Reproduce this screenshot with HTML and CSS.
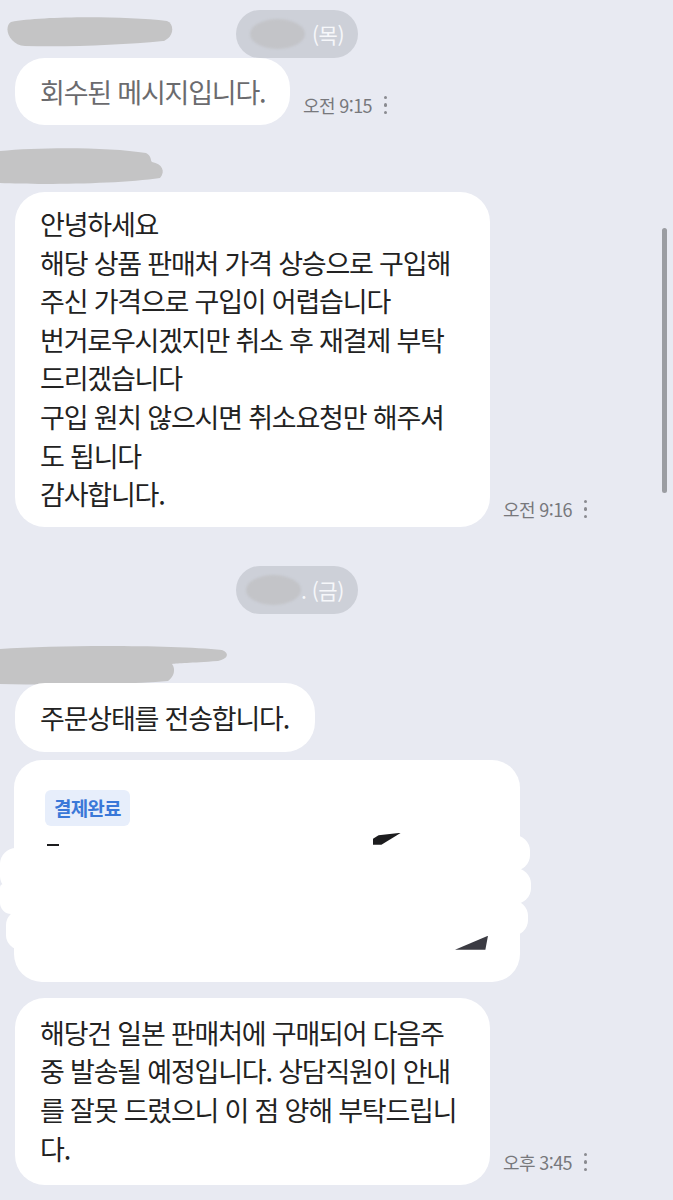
FILE: index.html
```html
<!DOCTYPE html>
<html lang="ko">
<head>
<meta charset="utf-8">
<title>채팅</title>
<link rel="stylesheet" href="styles.css">
</head>
<body>
<div class="scrollbar"></div>
<main class="chat">
  <div class="top-row">
    <svg class="scribble s1" width="170" height="30" viewBox="0 0 170 30"><path d="M8 5 C 40 -1, 120 -1, 164 4 C 172 7, 171 21, 160 24 C 120 28, 70 30, 22 29 C 6 28, 0 10, 8 5 Z" fill="#c4c4c5"/></svg>
    <div class="date-pill"><span class="blur"></span><span class="day">(목)</span></div>
  </div>

  <div class="msg-row r1">
    <div class="bubble recalled">회수된 메시지입니다.</div>
    <div class="meta"><span class="time">오전 9:15</span><span class="more"><i></i><i></i><i></i></span></div>
  </div>

  <svg class="scribble s2" width="170" height="38" viewBox="0 0 170 38"><path d="M0 4 C 40 0, 110 0, 146 6 C 152 9, 150 13, 152 15 C 162 17, 166 24, 160 31 C 120 37, 40 38, 0 36 Z" fill="#c4c4c5"/></svg>

  <div class="msg-row r2">
    <div class="bubble wide">안녕하세요<br>해당 상품 판매처 가격 상승으로 구입해<br>주신 가격으로 구입이 어렵습니다<br>번거로우시겠지만 취소 후 재결제 부탁<br>드리겠습니다<br>구입 원치 않으시면 취소요청만 해주셔<br>도 됩니다<br>감사합니다.</div>
    <div class="meta"><span class="time">오전 9:16</span><span class="more"><i></i><i></i><i></i></span></div>
  </div>

  <div class="date-pill p2"><span class="blur"></span><span class="day">. (금)</span></div>

  <svg class="scribble s3" width="230" height="40" viewBox="0 0 230 40"><path d="M0 4 C 60 0, 170 0, 222 5 C 230 8, 228 14, 218 16 C 190 18, 178 18, 172 19 C 176 24, 174 32, 168 36 C 120 40, 50 40, 0 39 Z" fill="#c4c4c5"/></svg>

  <div class="bubble short">주문상태를 전송합니다.</div>

  <div class="card">
    <span class="tag">결제완료</span>
    <span class="leak l1"></span>
    <span class="leak l2"></span>
    <span class="leak l3"></span>
    <span class="leak r1x"></span>
    <span class="leak r2x"></span>
    <span class="leak r3x"></span>
    <span class="mark m1"></span>
    <span class="mark m2"></span>
    <span class="mark m3"></span>
  </div>

  <div class="msg-row r4">
    <div class="bubble wide b4">해당건 일본 판매처에 구매되어 다음주<br>중 발송될 예정입니다. 상담직원이 안내<br>를 잘못 드렸으니 이 점 양해 부탁드립니<br>다.</div>
    <div class="meta"><span class="time">오후 3:45</span><span class="more"><i></i><i></i><i></i></span></div>
  </div>
</main>
</body>
</html>
```
FILE: styles.css
```css
html, body {
  margin: 0;
  padding: 0;
}
body {
  background: #e8eaf2;
  font-family: "Noto Sans CJK KR", "Noto Sans", sans-serif;
  color: #222;
  width: 673px;
  height: 1200px;
  overflow: hidden;
  position: relative;
}
.chat {
  display: flex;
  flex-direction: column;
  align-items: flex-start;
  padding-left: 15px;
  padding-top: 10px;
}
.scribble {
  display: block;
  margin-left: -15px;
}
.top-row {
  display: flex;
  align-items: flex-start;
  margin-left: -15px;
}
.s1 {
  margin-left: 3px;
  margin-top: 7px;
}
.date-pill {
  display: flex;
  align-items: center;
  height: 48px;
  width: 122px;
  box-sizing: border-box;
  border-radius: 24px;
  background: #cdd0d8;
  padding-left: 14px;
  margin-left: 63px;
}
.date-pill .blur {
  width: 55px;
  height: 30px;
  border-radius: 50%;
  background: #c3c4c8;
  filter: blur(1px);
}
.date-pill .day {
  color: #f6f7fa;
  font-size: 21px;
  margin-left: 7px;
  letter-spacing: -0.5px;
}
.p2 {
  margin-left: 221px;
  margin-top: 39px;
  padding-left: 10px;
}
.p2 .day {
  margin-left: 0;
}
.msg-row {
  display: flex;
  align-items: flex-end;
}
.bubble {
  background: #fff;
  border-radius: 30px;
  box-sizing: border-box;
  padding: 14px 25px;
  font-size: 27px;
  line-height: 39px;
  letter-spacing: -1.2px;
  white-space: nowrap;
}
.recalled {
  color: #6b6b6e;
  width: 275px;
}
.wide {
  width: 475px;
  line-height: 38.6px;
  padding-top: 13px;
  padding-bottom: 13px;
}
.short {
  width: 300px;
  padding-top: 15px;
  padding-bottom: 15px;
}
.b4 {
  padding-top: 16px;
  padding-bottom: 17px;
}
.meta {
  display: flex;
  align-items: center;
  margin-left: 13px;
  margin-bottom: 7px;
}
.time {
  font-size: 18px;
  color: #77787c;
  letter-spacing: -0.6px;
}
.more {
  display: flex;
  flex-direction: column;
  gap: 4px;
  margin-left: 12px;
}
.more i {
  display: block;
  width: 3.5px;
  height: 3.5px;
  border-radius: 50%;
  background: #8a8b90;
}
.r2 .meta { margin-bottom: 5px; }
.r4 .meta { margin-bottom: 10px; }
.s2 {
  margin-top: 22px;
}
.r2 {
  margin-top: 7px;
}
.s3 {
  margin-top: 31px;
  margin-bottom: -2px;
}
.card {
  position: relative;
  margin-top: 8px;
  margin-left: -1px;
  width: 506px;
  height: 222px;
  box-sizing: border-box;
  background: #fff;
  border-radius: 28px;
  padding: 30px 31px;
}
.tag {
  display: inline-block;
  background: #e7eefb;
  color: #3a78d8;
  font-weight: 700;
  font-size: 19px;
  line-height: 36px;
  padding: 0 9px;
  border-radius: 6px;
  letter-spacing: -0.8px;
}
.leak {
  position: absolute;
  background: #fff;
  border-radius: 16px;
}
.l1 { left: -14px; top: 88px; width: 40px; height: 44px; }
.l2 { left: -14px; top: 124px; width: 40px; height: 30px; border-radius: 4px 16px 16px 12px; }
.l3 { left: -8px; top: 150px; width: 30px; height: 40px; }
.r1x { right: -10px; top: 75px; width: 40px; height: 36px; }
.r2x { right: -11px; top: 108px; width: 40px; height: 36px; }
.r3x { right: -8px; top: 140px; width: 40px; height: 36px; }
.mark {
  position: absolute;
  background: #1c1c1e;
}
.m1 {
  left: 33px; top: 84px; width: 12px; height: 2px;
}
.m2 {
  left: 359px; top: 73px; width: 28px; height: 12px;
  clip-path: polygon(20% 20%, 100% 0, 30% 100%, 0 100%, 0 50%);
}
.m3 {
  left: 441px; top: 176px; width: 33px; height: 14px;
  background: #3b3b42;
  clip-path: polygon(100% 0, 92% 100%, 0 100%);
}
.r4 {
  margin-top: 16px;
}
.scrollbar {
  position: absolute;
  left: 662px;
  top: 228px;
  width: 5px;
  height: 265px;
  border-radius: 3px;
  background: #9b9da2;
}
```
